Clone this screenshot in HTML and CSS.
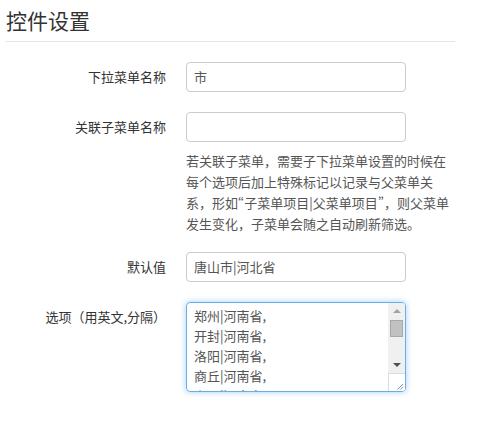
FILE: index.html
```html
<!DOCTYPE html>
<html lang="zh-CN">
<head>
<meta charset="utf-8">
<title>控件设置</title>
<link rel="stylesheet" href="styles.css">
</head>
<body>
<div class="page">
  <h1 class="title">控件设置</h1>
  <form class="form">
    <div class="row">
      <label class="label">下拉菜单名称</label>
      <div class="field"><div class="input">市</div></div>
    </div>
    <div class="row row-help">
      <label class="label">关联子菜单名称</label>
      <div class="field">
        <div class="input"></div>
        <p class="help">若关联子菜单，需要子下拉菜单设置的时候在每个选项后加上特殊标记以记录与父菜单关系，形如<span class="q">“</span>子菜单项目|父菜单项目<span class="q">”</span>，则父菜单发生变化，子菜单会随之自动刷新筛选。</p>
      </div>
    </div>
    <div class="row">
      <label class="label">默认值</label>
      <div class="field"><div class="input">唐山市|河北省</div></div>
    </div>
    <div class="row">
      <label class="label">选项（用英文,分隔）</label>
      <div class="field">
        <div class="textarea">
          <div class="ta-text">郑州|河南省,<br>开封|河南省,<br>洛阳|河南省,<br>商丘|河南省,<br>安阳|河南省,</div>
          <div class="sbar">
            <div class="sb-btn"><span class="tri-up"></span></div>
            <div class="sb-track"><div class="sb-thumb"></div></div>
            <div class="sb-btn"><span class="tri-down"></span></div>
            <div class="sb-corner">
              <svg width="17" height="18" viewBox="0 0 17 18"><path d="M9 16 L15 10 M12 16 L15 13" stroke="#8a8a8a" stroke-width="1" fill="none"/></svg>
            </div>
          </div>
        </div>
      </div>
    </div>
  </form>
</div>
</body>
</html>
```
FILE: styles.css
```css
* { box-sizing: border-box; }
html, body { margin: 0; padding: 0; background: #fff; }
body {
  font-family: "Noto Sans CJK SC", "Noto Sans", sans-serif;
  font-size: 13px;
  color: #333;
}
.page { padding: 0 27px 0 6px; }
.title {
  margin: 0;
  padding: 5px 0 6px;
  font-size: 21px;
  line-height: 30px;
  font-weight: normal;
  color: #333;
  border-bottom: 1px solid #e5e5e5;
}
.form { margin-top: 20px; }
.row {
  display: grid;
  grid-template-columns: 160px 1fr;
  column-gap: 20px;
  margin-bottom: 20px;
}
.row-help { margin-bottom: 18px; }
.label {
  text-align: right;
  padding-top: 5px;
  line-height: 20px;
  white-space: nowrap;
}
.input {
  width: 220px;
  height: 30px;
  border: 1px solid #ccc;
  border-radius: 4px;
  padding: 0 7px;
  line-height: 28px;
  color: #555;
}
.help {
  margin: 8px 0 0;
  line-height: 21px;
  color: #555;
}
.q { font-feature-settings: "pwid" 1; }
.textarea {
  width: 220px;
  height: 90px;
  border: 1px solid #66afe9;
  border-radius: 4px;
  box-shadow: 0 0 6px rgba(102, 175, 233, 0.6);
  display: flex;
  overflow: hidden;
}
.ta-text {
  flex: 1;
  padding: 3px 7px;
  line-height: 20px;
  color: #555;
  overflow: hidden;
}
.sbar {
  width: 17px;
  display: flex;
  flex-direction: column;
  background: #f0f0f0;
}
.sb-btn {
  height: 16px;
  display: flex;
  align-items: center;
  justify-content: center;
}
.tri-up {
  width: 0; height: 0;
  border-left: 4px solid transparent;
  border-right: 4px solid transparent;
  border-bottom: 4px solid #a3a3a3;
}
.tri-down {
  width: 0; height: 0;
  border-left: 4px solid transparent;
  border-right: 4px solid transparent;
  border-top: 4px solid #505050;
}
.sb-track {
  flex: 1;
  padding: 1px 2px 0;
}
.sb-thumb {
  height: 17px;
  background: #c1c1c1;
  border: 1px solid #a8a8a8;
}
.sb-corner {
  height: 18px;
  background: #fff;
  border-top: 1px solid #dcdcdc;
  border-left: 1px solid #dcdcdc;
  display: flex;
}
.sb-corner svg { display: block; }
```
